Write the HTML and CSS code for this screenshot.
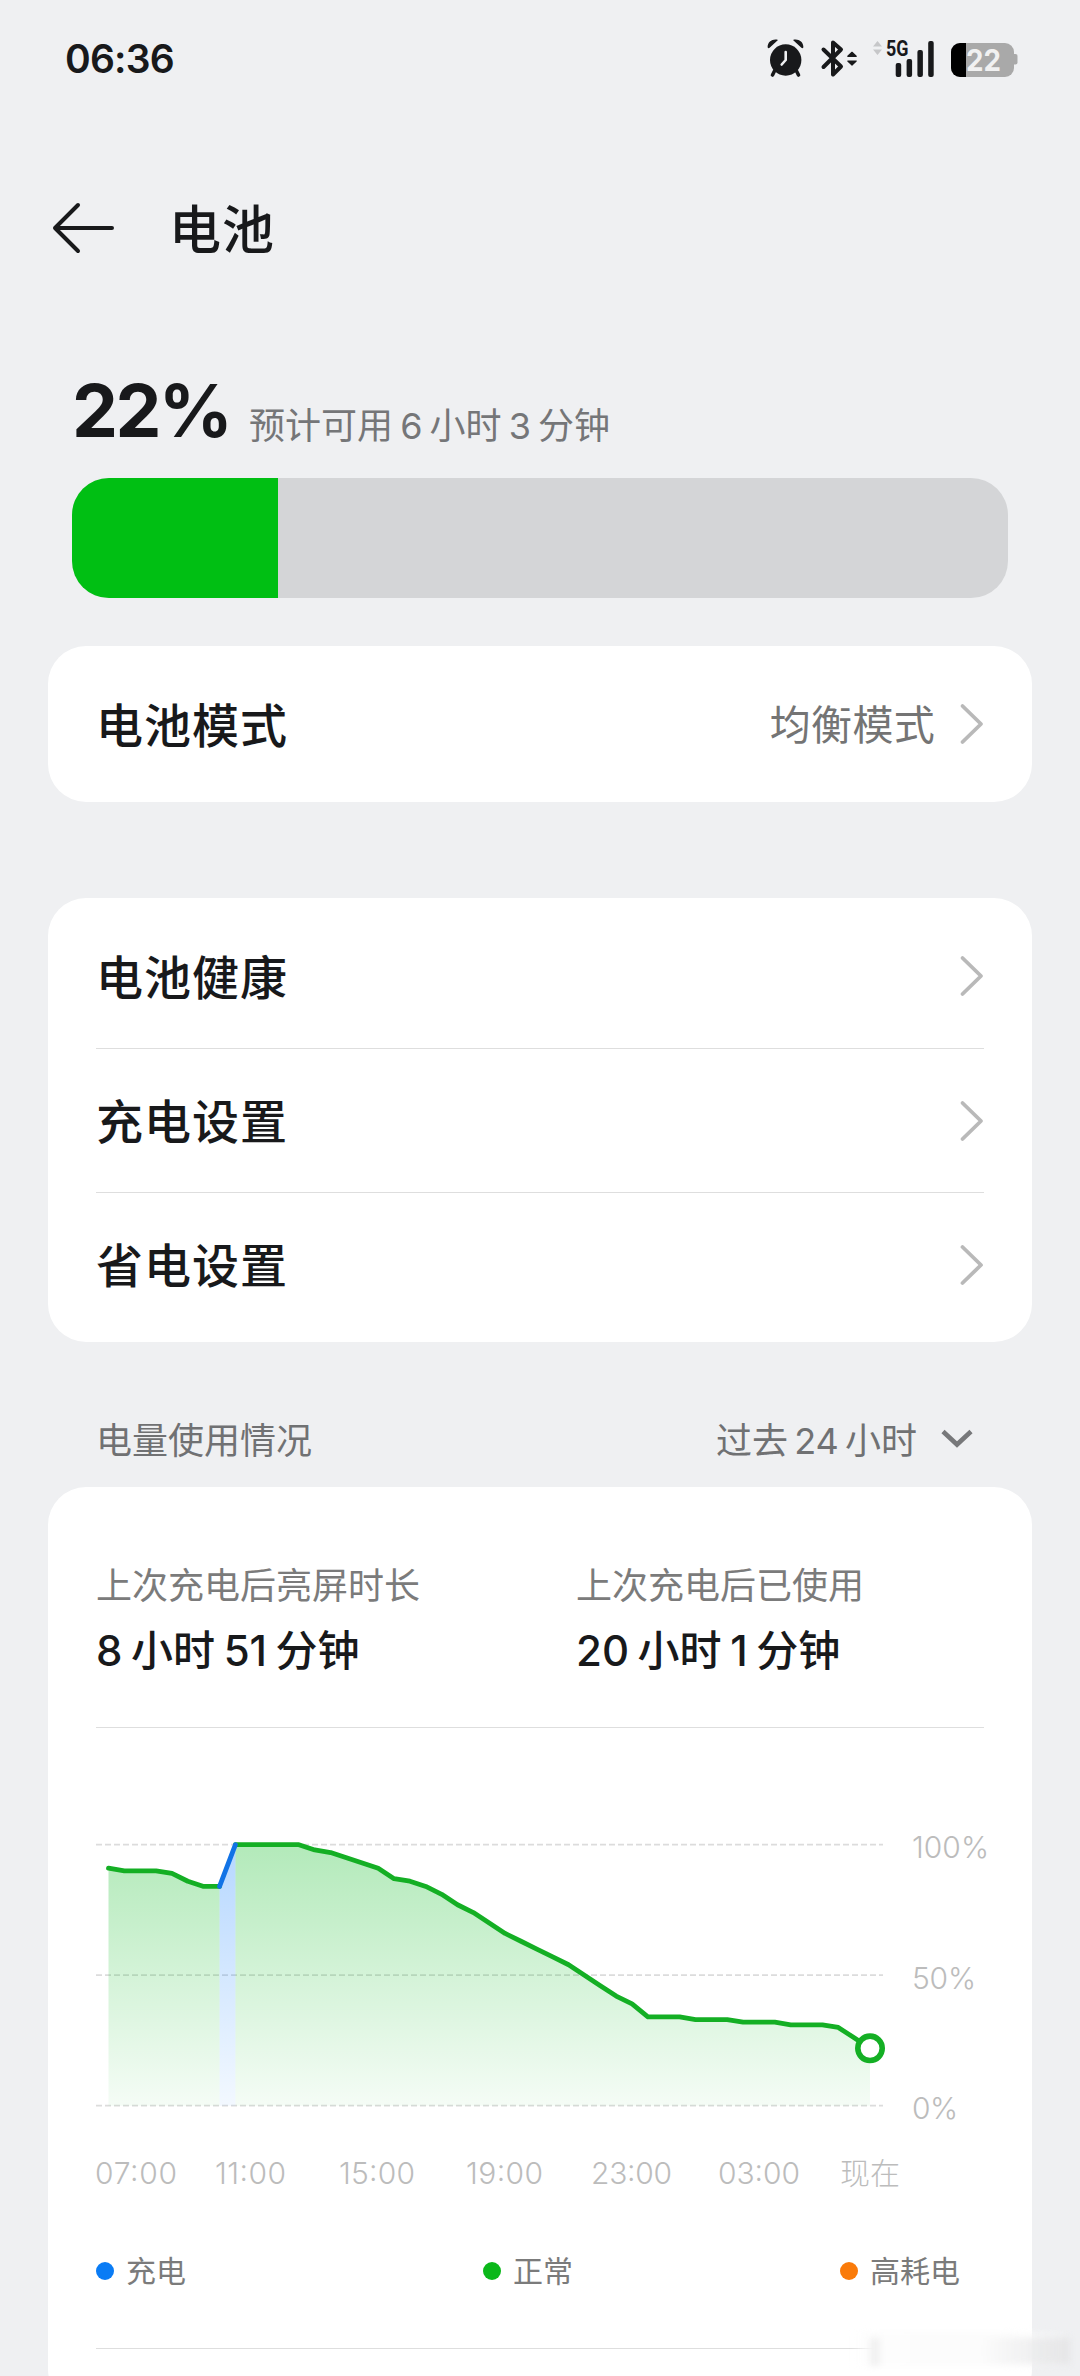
FILE: index.html
```html
<!DOCTYPE html>
<html lang="zh-CN">
<head>
<meta charset="utf-8">
<title>电池</title>
<link rel="stylesheet" href="styles.css">
</head>
<body>
<div class="status">
  <span class="clock">06:36</span>
  <svg class="status-icons" width="254" height="44" viewBox="0 0 254 44">
    <g fill="#18191b">
      <circle cx="18.7" cy="24" r="15.7"/>
      <path d="M.6 11.2C.6 5.500 6 2.500 11 4L2.600 11.800Q1.200 12.800.6 11.200ZM36.400 11.200C36.400 5.500 31 2.500 26 4L34.400 11.800Q35.800 12.800 36.400 11.200Z"/>
      <path d="M8.500 33L5.500 39M28.500 33L31.500 39" stroke="#18191b" stroke-width="3.600" stroke-linecap="round"/>
      <path d="M80.800 20.300L85 16.300 89.200 20.300ZM80.800 25L85 29 89.200 25Z" stroke="#18191b" stroke-width="1.200" stroke-linejoin="round"/>
      <rect x="128.700" y="27" width="5.500" height="14" rx="2"/>
      <rect x="139.600" y="23" width="5.500" height="18" rx="2"/>
      <rect x="150.400" y="14" width="5.500" height="27" rx="2"/>
      <rect x="161.200" y="5" width="5.500" height="36" rx="2"/>
    </g>
    <path d="M18.700 16v8l-4 4.500" fill="none" stroke="#eff0f2" stroke-width="2.600" stroke-linecap="round" stroke-linejoin="round"/>
    <path d="M56.500 13.500L74 30.500 66 38.500V6.500L74 13.500 56.500 31" fill="none" stroke="#18191b" stroke-width="4" stroke-linecap="round" stroke-linejoin="round"/>
    <path d="M106 10.500L110.500 5 115 10.500ZM106 13.500L110.500 19 115 13.500Z" fill="#c6c7c9"/>
    <text class="net" x="119" y="20" textLength="22.500" lengthAdjust="spacingAndGlyphs">5G</text>
    <rect x="184" y="7" width="63" height="34" rx="9" fill="#a9a9a9"/>
    <path d="M247 18h1.500q2 0 2 2v6.500q0 2-2 2H247Z" fill="#a9a9a9"/>
    <path d="M199 7H193a9 9 0 0 0-9 9V32a9 9 0 0 0 9 9h6Z" fill="#000"/>
    <text class="level" x="199" y="35" textLength="35" lengthAdjust="spacingAndGlyphs">22</text>
  </svg>
</div>

<header class="header">
  <svg width="64" height="52" viewBox="0 0 64 52" fill="none" stroke="#18191b" stroke-width="4" stroke-linecap="round" stroke-linejoin="round"><path d="M27 3L4 26 27 49M4 26H61"/></svg>
  <h1>电池</h1>
</header>

<main>
  <section class="summary">
    <div class="summary-text"><strong>22%</strong><span>预计可用 6 小时 3 分钟</span></div>
    <div class="meter"><div class="meter-fill" style="width:22%"></div></div>
  </section>

  <section class="card mode">
    <div class="row"><span class="label">电池模式</span><span class="value">均衡模式</span><svg class="chev" viewBox="0 0 26 44"><path d="M4.500 4L23 22 4.500 40"/></svg></div>
  </section>

  <section class="card settings">
    <div class="row"><span class="label">电池健康</span><svg class="chev" viewBox="0 0 26 44"><path d="M4.500 4L23 22 4.500 40"/></svg></div>
    <div class="row"><span class="label">充电设置</span><svg class="chev" viewBox="0 0 26 44"><path d="M4.500 4L23 22 4.500 40"/></svg></div>
    <div class="row"><span class="label">省电设置</span><svg class="chev" viewBox="0 0 26 44"><path d="M4.500 4L23 22 4.500 40"/></svg></div>
  </section>

  <div class="section-head">
    <span>电量使用情况</span>
    <span class="range">过去 24 小时</span>
    <svg width="32" height="20" viewBox="0 0 32 20" fill="none" stroke="#77787a" stroke-width="4.600"><path d="M2 2.500L16 15.500 30 2.500"/></svg>
  </div>

  <section class="card usage">
    <div class="stats">
      <div><p class="stat-name">上次充电后亮屏时长</p><p class="stat-value">8 小时 51 分钟</p></div>
      <div><p class="stat-name">上次充电后已使用</p><p class="stat-value">20 小时 1 分钟</p></div>
    </div>
    <svg class="chart" width="920" height="400" viewBox="96 1800 920 400">
      <defs>
        <linearGradient id="green" gradientUnits="userSpaceOnUse" x1="0" y1="1845" x2="0" y2="2106"><stop offset="0" stop-color="#00b818" stop-opacity=".3"/><stop offset="1" stop-color="#00b818" stop-opacity=".04"/></linearGradient>
        <linearGradient id="blue" gradientUnits="userSpaceOnUse" x1="0" y1="1845" x2="0" y2="2106"><stop offset="0" stop-color="#0a7aff" stop-opacity=".3"/><stop offset="1" stop-color="#0a7aff" stop-opacity=".05"/></linearGradient>
      </defs>
      <path class="grid" d="M96 1844.700H883M96 1975.200H883M96 2105.700H883"/>
      <g id="plot"></g>
      <g class="axis">
        <text x="912" y="1857.500" textLength="77">100%</text>
        <text x="912" y="1989" textLength="64">50%</text>
        <text x="912" y="2118.500" textLength="46">0%</text>
        <text x="95" y="2184" textLength="82">07:00</text>
        <text x="215" y="2184" textLength="71">11:00</text>
        <text x="339" y="2184" textLength="76">15:00</text>
        <text x="466" y="2184" textLength="77">19:00</text>
        <text x="591" y="2184" textLength="81">23:00</text>
        <text x="718" y="2184" textLength="82">03:00</text>
        <text x="840" y="2184">现在</text>
      </g>
    </svg>
    <div class="legend">
      <span><i class="dot charging"></i>充电</span>
      <span><i class="dot normal"></i>正常</span>
      <span><i class="dot high"></i>高耗电</span>
    </div>
    <hr>
  </section>
</main>
<div class="smudge"><i></i><b></b></div>
<script src="chart.js"></script>
</body>
</html>
```
FILE: styles.css
```css
* { box-sizing: border-box; }
body {
  margin: 0;
  width: 1080px;
  height: 2376px;
  overflow: hidden;
  position: relative;
  background: #eff0f2;
  color: #18191b;
  font-family: Inter, "Noto Sans CJK SC", sans-serif;
}
h1, p { margin: 0; font-weight: 500; }
svg { display: block; flex: none; }

.status {
  display: flex;
  justify-content: space-between;
  height: 120px;
  padding: 36px 59px 0 65px;
}
.clock { font-size: 39px; font-weight: 600; line-height: 46px; letter-spacing: -0.8px; }
.net { font: 700 22px Roboto, sans-serif; fill: #18191b; }
.level { font: 700 30px Inter, sans-serif; fill: #f1f1f1; }

.header {
  display: flex;
  align-items: center;
  height: 216px;
  padding-left: 51px;
}
.header h1 { margin-left: 54px; padding-top: 5px; font-size: 52px; line-height: 80px; letter-spacing: 1px; }

.summary { height: 310px; padding: 36px 72px 0; }
.summary-text { display: flex; align-items: baseline; height: 106px; }
.summary strong { width: 177px; font-size: 73px; font-weight: 700; line-height: 78px; letter-spacing: -2.6px; }
.summary span { position: relative; top: 2px; color: #757678; font-size: 36px; white-space: nowrap; word-spacing: -3px; }
.meter { height: 120px; border-radius: 37px; background: #d4d5d7; overflow: hidden; }
.meter-fill { height: 100%; background: #00bf13; }

.card { margin: 0 48px; padding: 6px 48px; border-radius: 38px; background: #fff; }
.mode { margin-bottom: 96px; }
.row { display: flex; align-items: center; height: 144px; }
.row + .row { border-top: 1px solid #dedede; }
.label { flex: 1; font-size: 47px; font-weight: 500; line-height: 72px; padding-top: 3px; letter-spacing: 1px; }
.value { color: #747474; font-size: 41px; line-height: 60px; padding-top: 2px; margin-right: 23px; letter-spacing: 0.3px; }
.chev { width: 26px; height: 44px; fill: none; stroke: #b9b9b9; stroke-width: 3.800; stroke-linecap: round; stroke-linejoin: round; }

.section-head {
  display: flex;
  align-items: center;
  height: 145px;
  padding: 48px 107px 0 96px;
  color: #707173;
  font-size: 36px;
  line-height: 50px;
}
.section-head span { padding-top: 5px; }
.section-head .range { margin-left: auto; margin-right: 24px; word-spacing: -4px; }

.usage { height: 920px; padding-top: 72px; }
.stats { display: grid; grid-template-columns: 480px 1fr; height: 169px; border-bottom: 1px solid #dedede; }
.stat-name { color: #7b7b7b; font-size: 36px; font-weight: 400; line-height: 54px; }
.stat-value { font-size: 42px; line-height: 75px; word-spacing: -2.6px; }

.chart { margin-top: 72px; }
.grid { fill: none; stroke: #dcdcdc; stroke-width: 1.8; stroke-dasharray: 6 3; }
.axis { fill: #bcbcbc; font-size: 30px; font-weight: 300; }

.legend { display: grid; grid-template-columns: 387px 357px auto; height: 148px; padding-top: 49px; color: #7b7b7b; font-size: 30px; line-height: 44px; }
.legend span { display: flex; align-items: center; height: 44px; gap: 12px; }
.dot { width: 18px; height: 18px; border-radius: 50%; }
.charging { background: #0a7cf5; }
.normal { background: #0bb81a; }
.high { background: #fa7b0a; }
hr { margin: 0; border: 0; border-top: 1px solid #dedede; }

.smudge { position: absolute; left: 852px; top: 2332px; width: 218px; height: 34px; background: linear-gradient(90deg, #fff0, #fdfdfd 10%, #fcfcfc 70%, #f0f0f100); filter: blur(3px); }
.smudge i { position: absolute; left: 18px; top: 6px; width: 10px; height: 28px; background: #f1f1f1; }
.smudge b { position: absolute; right: 0; top: 6px; width: 90px; height: 26px; background: linear-gradient(90deg, #e6e6e700, #e6e6e7); }
```
FILE: chart.js
```js
const levels = [91, 90, 90, 90, 89, 86, 84, 84, 100, 100, 100, 100, 100, 98, 97, 95, 93, 91, 87, 86, 84, 81, 77, 74, 70, 66, 63, 60, 57, 54, 50, 46, 42, 39, 34, 34, 34, 33, 33, 33, 32, 32, 32, 31, 31, 31, 30, 26, 22];
const x = i => +(108.5 + i * 15.865).toFixed(2);
const y = v => +(2105.7 - v * 2.61).toFixed(2);

function points(from, to) {
  const list = [];
  for (let i = from; i <= to; i++) list.push(x(i) + ' ' + y(levels[i]));
  return 'M' + list.join('L');
}

// Each segment: first sample, last sample, area gradient, line colour.
const segments = [[0, 7, 'green', '#14af24'], [8, 48, 'green', '#14af24'], [7, 8, 'blue', '#1173e6']];
let out = '';
for (const [a, b, fill] of segments) out += `<path d="${points(a, b)}V2105.7H${x(a)}Z" fill="url(#${fill})"/>`;
for (const [a, b, , stroke] of segments) out += `<path d="${points(a, b)}" fill="none" stroke="${stroke}" stroke-width="4.8" stroke-linecap="round" stroke-linejoin="round"/>`;
out += `<circle cx="${x(48)}" cy="${y(22)}" r="12.2" fill="#fff" stroke="#14af24" stroke-width="5.6"/>`;
document.getElementById('plot').innerHTML = out;
```
